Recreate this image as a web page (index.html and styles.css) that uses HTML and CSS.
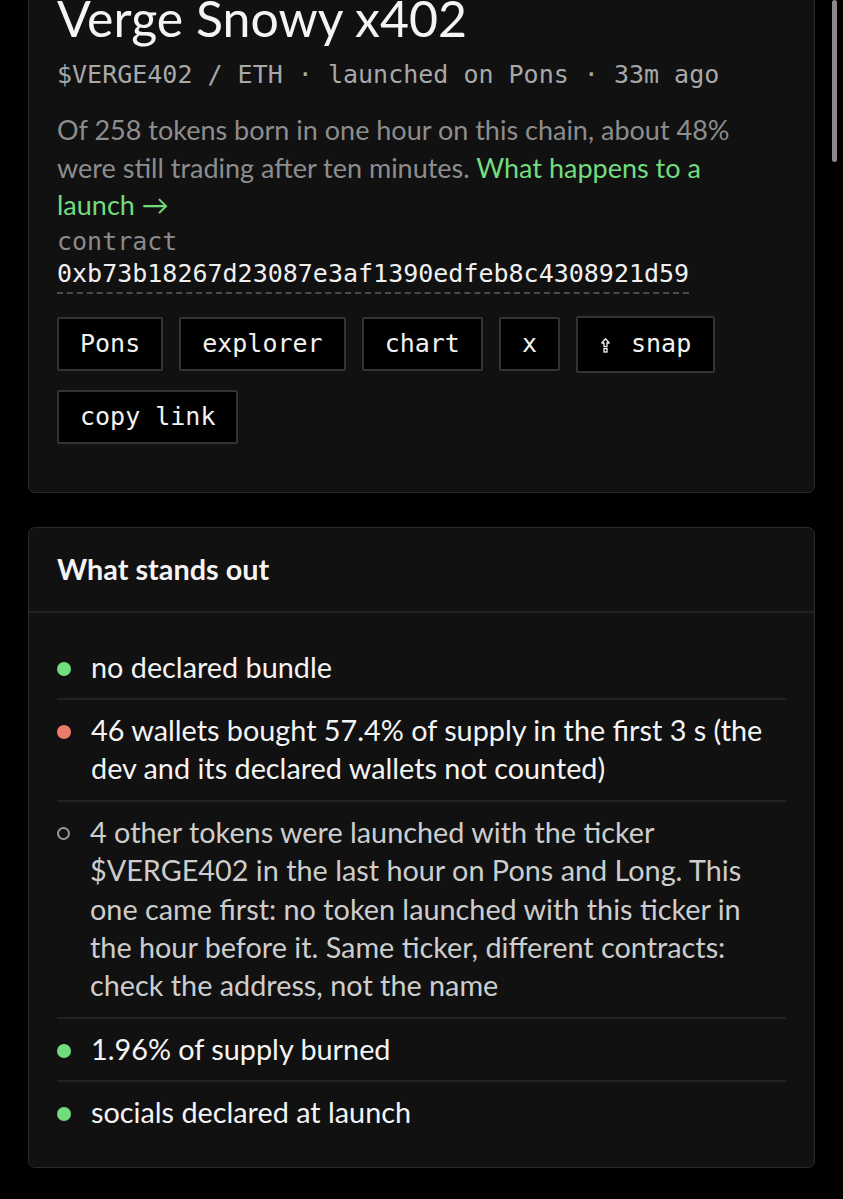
FILE: index.html
```html
<!DOCTYPE html>
<html lang="en">
<head>
<meta charset="utf-8">
<title>Verge Snowy x402</title>
<link rel="stylesheet" href="styles.css">
</head>
<body>
<main class="page">
  <section class="card hero">
    <h1 class="title">Verge Snowy x402</h1>
    <p class="meta">$VERGE402 / ETH · launched on Pons · 33m ago</p>
    <p class="blurb">Of 258 tokens born in one hour on this chain, about 48% were still trading after ten minutes. <a class="more" href="#">What happens to a <span class="nowrap">launch →</span></a></p>
    <div class="contract">
      <div class="contract-label">contract</div>
      <div class="contract-addr">0xb73b18267d23087e3af1390edfeb8c4308921d59</div>
    </div>
    <div class="actions">
      <button class="btn">Pons</button>
      <button class="btn">explorer</button>
      <button class="btn">chart</button>
      <button class="btn">x</button>
      <button class="btn btn-snap"><svg class="snap-icon" viewBox="0 0 9 15" width="9" height="15" aria-hidden="true"><path d="M4.5 0.8 L8.2 5 H6 V8.6 H3 V5 H0.8 Z" fill="none" stroke="#f2f2f2" stroke-width="1.3" stroke-linejoin="round"/><rect x="3" y="10.6" width="3" height="3.4" fill="none" stroke="#f2f2f2" stroke-width="1.3"/></svg> snap</button>
      <button class="btn">copy link</button>
    </div>
  </section>

  <section class="card findings">
    <h2 class="card-head">What stands out</h2>
    <ul class="list">
      <li class="item"><span class="dot dot-good"></span><span class="item-text">no declared bundle</span></li>
      <li class="item"><span class="dot dot-bad"></span><span class="item-text">46 wallets bought 57.4% of supply in the first 3 s (the dev and its declared wallets not counted)</span></li>
      <li class="item item-neutral"><span class="dot dot-neutral"></span><span class="item-text">4 other tokens were launched with the ticker $VERGE402 in the last hour on Pons and Long. This one came first: no token launched with this ticker in the hour before it. Same ticker, different contracts: check the address, not the name</span></li>
      <li class="item"><span class="dot dot-good"></span><span class="item-text">1.96% of supply burned</span></li>
      <li class="item"><span class="dot dot-good"></span><span class="item-text">socials declared at launch</span></li>
    </ul>
  </section>
</main>
<div class="scroll-indicator"></div>
</body>
</html>
```

FILE: styles.css
```css
* { box-sizing: border-box; }

html, body {
  margin: 0;
  padding: 0;
  background: #000;
}

body {
  font-family: Lato, "Open Sans", sans-serif;
  color: #f2f2f2;
  overflow: hidden;
}

.page {
  padding: 0 28px;
  display: flex;
  flex-direction: column;
  gap: 34px;
}

.card {
  background: #111111;
  border: 1px solid #2a2a2a;
  border-radius: 7px;
}

.hero {
  margin-top: -39px;
  padding: 28px 28px 48px;
}

.title {
  margin: 0;
  font-size: 50px;
  line-height: 57px;
  font-weight: 400;
  color: #f4f4f4;
}

.meta {
  margin: 10px 0 0;
  font-family: "DejaVu Sans Mono", "Liberation Mono", monospace;
  font-size: 25px;
  line-height: 36px;
  color: #a8a8a8;
}

.blurb {
  margin: 18px 0 0;
  font-size: 27px;
  line-height: 37.5px;
  color: #8d8d8d;
}

.more {
  color: #72dd7e;
  text-decoration: none;
}

.nowrap {
  white-space: nowrap;
}

.contract {
  margin-top: 2px;
  font-family: "DejaVu Sans Mono", "Liberation Mono", monospace;
  font-size: 25px;
}

.contract-label {
  color: #8a8a8a;
  line-height: 32px;
}

.contract-addr {
  display: inline-block;
  color: #f0f0f0;
  line-height: 32px;
  padding-bottom: 2px;
  border-bottom: 2px dashed #4a4a4a;
}

.actions {
  margin-top: 22px;
  display: flex;
  flex-wrap: wrap;
  align-items: center;
  gap: 17px 16px;
}

.btn {
  font-family: "DejaVu Sans Mono", "Liberation Mono", monospace;
  font-size: 25px;
  color: #f2f2f2;
  background: #000;
  border: 2px solid #333;
  border-radius: 2px;
  height: 54px;
  padding: 0 21px;
  line-height: 50px;
}

.btn-snap {
  height: 57px;
  padding: 0 22px 0 23px;
}

.snap-icon {
  display: inline-block;
  vertical-align: -1px;
  margin-right: 6px;
}

.card-head {
  margin: 0;
  padding: 22px 28px 23px;
  font-size: 28.8px;
  line-height: 38px;
  font-weight: 700;
  color: #f4f4f4;
  border-bottom: 2px solid #222;
}

.list {
  list-style: none;
  margin: 0;
  padding: 24px 28px 23px;
}

.item {
  display: flex;
  align-items: flex-start;
  gap: 20px;
  padding: 11px 0 12px;
  font-size: 28.8px;
  line-height: 38.4px;
  color: #f4f4f4;
  border-bottom: 2px solid #222;
}

.item:last-child {
  border-bottom: none;
}

.item-neutral {
  color: #cdcdcd;
}

.dot {
  flex: none;
  width: 14px;
  height: 14px;
  border-radius: 50%;
  margin-top: 14px;
}

.dot-good { background: #72dd7e; }
.dot-bad { background: #ec7b6c; }
.dot-neutral {
  border: 2.5px solid #9a9a9a;
  width: 13px;
  height: 13px;
  margin-top: 14.5px;
}

.scroll-indicator {
  position: fixed;
  top: 0;
  right: 6px;
  width: 5px;
  height: 162px;
  border-radius: 3px;
  background: #8a8a8a;
}
```
